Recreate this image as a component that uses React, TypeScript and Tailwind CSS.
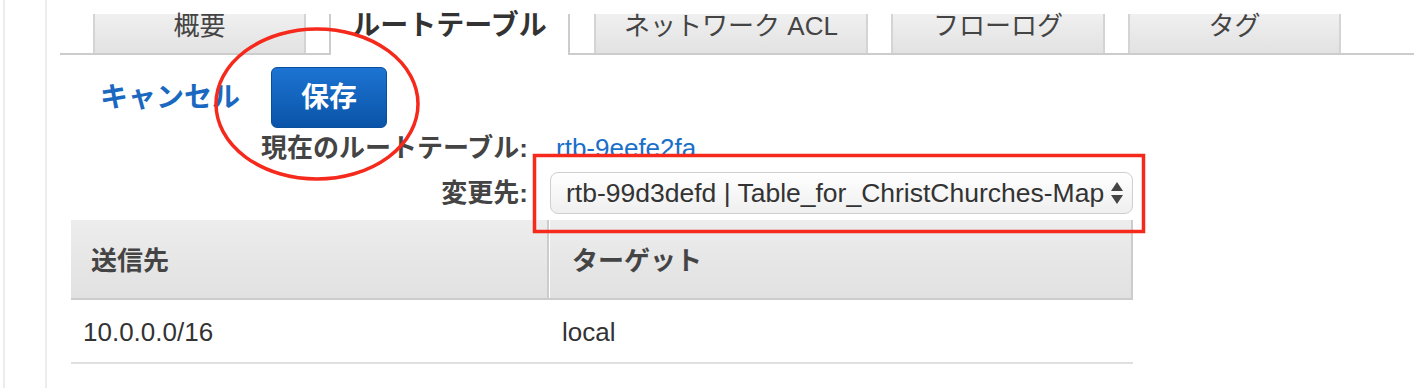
const font = { fontFamily: '"Liberation Sans", "Noto Sans CJK JP", sans-serif' };

const tabs = [
    { label: "概要", w: "w-[213px]", ml: "ml-0" },
    { label: "ルートテーブル", w: "w-[241px]", ml: "ml-[23px]", active: true },
    { label: "ネットワーク ACL", w: "w-[274px]", ml: "ml-[24px]" },
    { label: "フローログ", w: "w-[214px]", ml: "ml-[23px]" },
    { label: "タグ", w: "w-[213px]", ml: "ml-[23px]" },
];

function SelectArrows() {
    return (
        <svg width="14" height="26" viewBox="0 0 14 26" className="shrink-0">
            <path d="M7 2 L13 11 L1 11 Z" fill="#444" />
            <path d="M7 24 L13 15 L1 15 Z" fill="#444" />
        </svg>
    );
}

export default function App() {
    return (
        <div className="relative flex w-[1414px] h-[388px] overflow-hidden bg-white text-[#333]" style={font}>
            <div className="w-[3px]" />
            <div className="w-[42px] border-l-2 border-[#ececec]" />
            <div className="flex-1 border-l-2 border-[#ececec] pt-[14px]">
                {/* tabs */}
                <div className="ml-[13px] flex items-end pl-[33px] border-b-2 border-[#cccccc]">
                    {tabs.map((t) =>
                        t.active ? (
                            <div
                                key={t.label}
                                className={`${t.w} ${t.ml} h-[41px] -mb-[2px] bg-white border-x-2 border-[#cccccc] text-center text-[28px] font-bold leading-[24px] text-[#333]`}
                            >
                                {t.label}
                            </div>
                        ) : (
                            <div
                                key={t.label}
                                className={`${t.w} ${t.ml} h-[39px] border-x-2 border-[#d4d4d4] bg-gradient-to-b from-[#f0f0f0] to-[#e2e2e2] text-center text-[26px] leading-[24px] text-[#444]`}
                            >
                                {t.label}
                            </div>
                        )
                    )}
                </div>

                {/* actions */}
                <div className="mt-[12px] flex items-center pl-[53px]">
                    <span className="text-[28px] font-bold text-[#1a68c0] leading-none">キャンセル</span>
                    <button className="ml-[31px] w-[116px] h-[61px] rounded-[6px] border border-[#0a4f9e] bg-gradient-to-b from-[#1c74d2] to-[#0a54a8] text-white text-[28px] font-bold">
                        保存
                    </button>
                </div>

                {/* current / change to */}
                <div className="mt-[7px] flex items-center h-[26px]">
                    <div className="w-[481px] text-right text-[26px] font-bold text-[#444] leading-[26px]">現在のルートテーブル:</div>
                    <span className="ml-[28px] text-[26px] text-[#1a6fc9] leading-[26px]">rtb-9eefe2fa</span>
                </div>
                <div className="mt-[11px] flex items-center h-[42px]">
                    <div className="w-[481px] text-right text-[26px] font-bold text-[#444] leading-[26px]">変更先:</div>
                    <div className="ml-[22px] w-[583px] h-[42px] flex items-center justify-between rounded-[8px] border border-[#cfcfcf] bg-gradient-to-b from-white to-[#efefef] pl-[15px] pr-[8px]">
                        <span className="text-[26.5px] text-[#333] leading-none whitespace-nowrap">rtb-99d3defd | Table_for_ChristChurches-Map</span>
                        <SelectArrows />
                    </div>
                </div>

                {/* table */}
                <div className="mt-[6px] ml-[24px] w-[1062px]">
                    <div className="flex h-[80px] border-b-2 border-[#cccccc] bg-gradient-to-b from-[#ededed] to-[#e1e1e1]">
                        <div className="w-[478px] flex items-center pl-[20px] pt-[5px] border-r-2 border-[#cccccc] text-[26px] font-bold text-[#444]">
                            送信先
                        </div>
                        <div className="flex-1 flex items-center pl-[22px] pt-[5px] border-l border-white border-r-2 border-r-[#cccccc] text-[26px] font-bold text-[#444]">
                            ターゲット
                        </div>
                    </div>
                    <div className="flex h-[64px] border-b-2 border-[#e0e0e0]">
                        <div className="w-[478px] flex items-center pl-[12px] pt-[3px] text-[26px] text-[#333]">10.0.0.0/16</div>
                        <div className="flex-1 flex items-center pl-[13px] pt-[3px] text-[26px] text-[#333]">local</div>
                    </div>
                </div>
            </div>

            {/* annotations */}
            <svg className="absolute left-0 top-0 pointer-events-none" width="1414" height="388">
                <ellipse cx="317" cy="104" rx="101" ry="75" fill="none" stroke="#f5291c" strokeWidth="3.5" />
                <rect x="534.5" y="155.5" width="609" height="76" fill="none" stroke="#f5291c" strokeWidth="3.5" />
            </svg>
        </div>
    );
}
